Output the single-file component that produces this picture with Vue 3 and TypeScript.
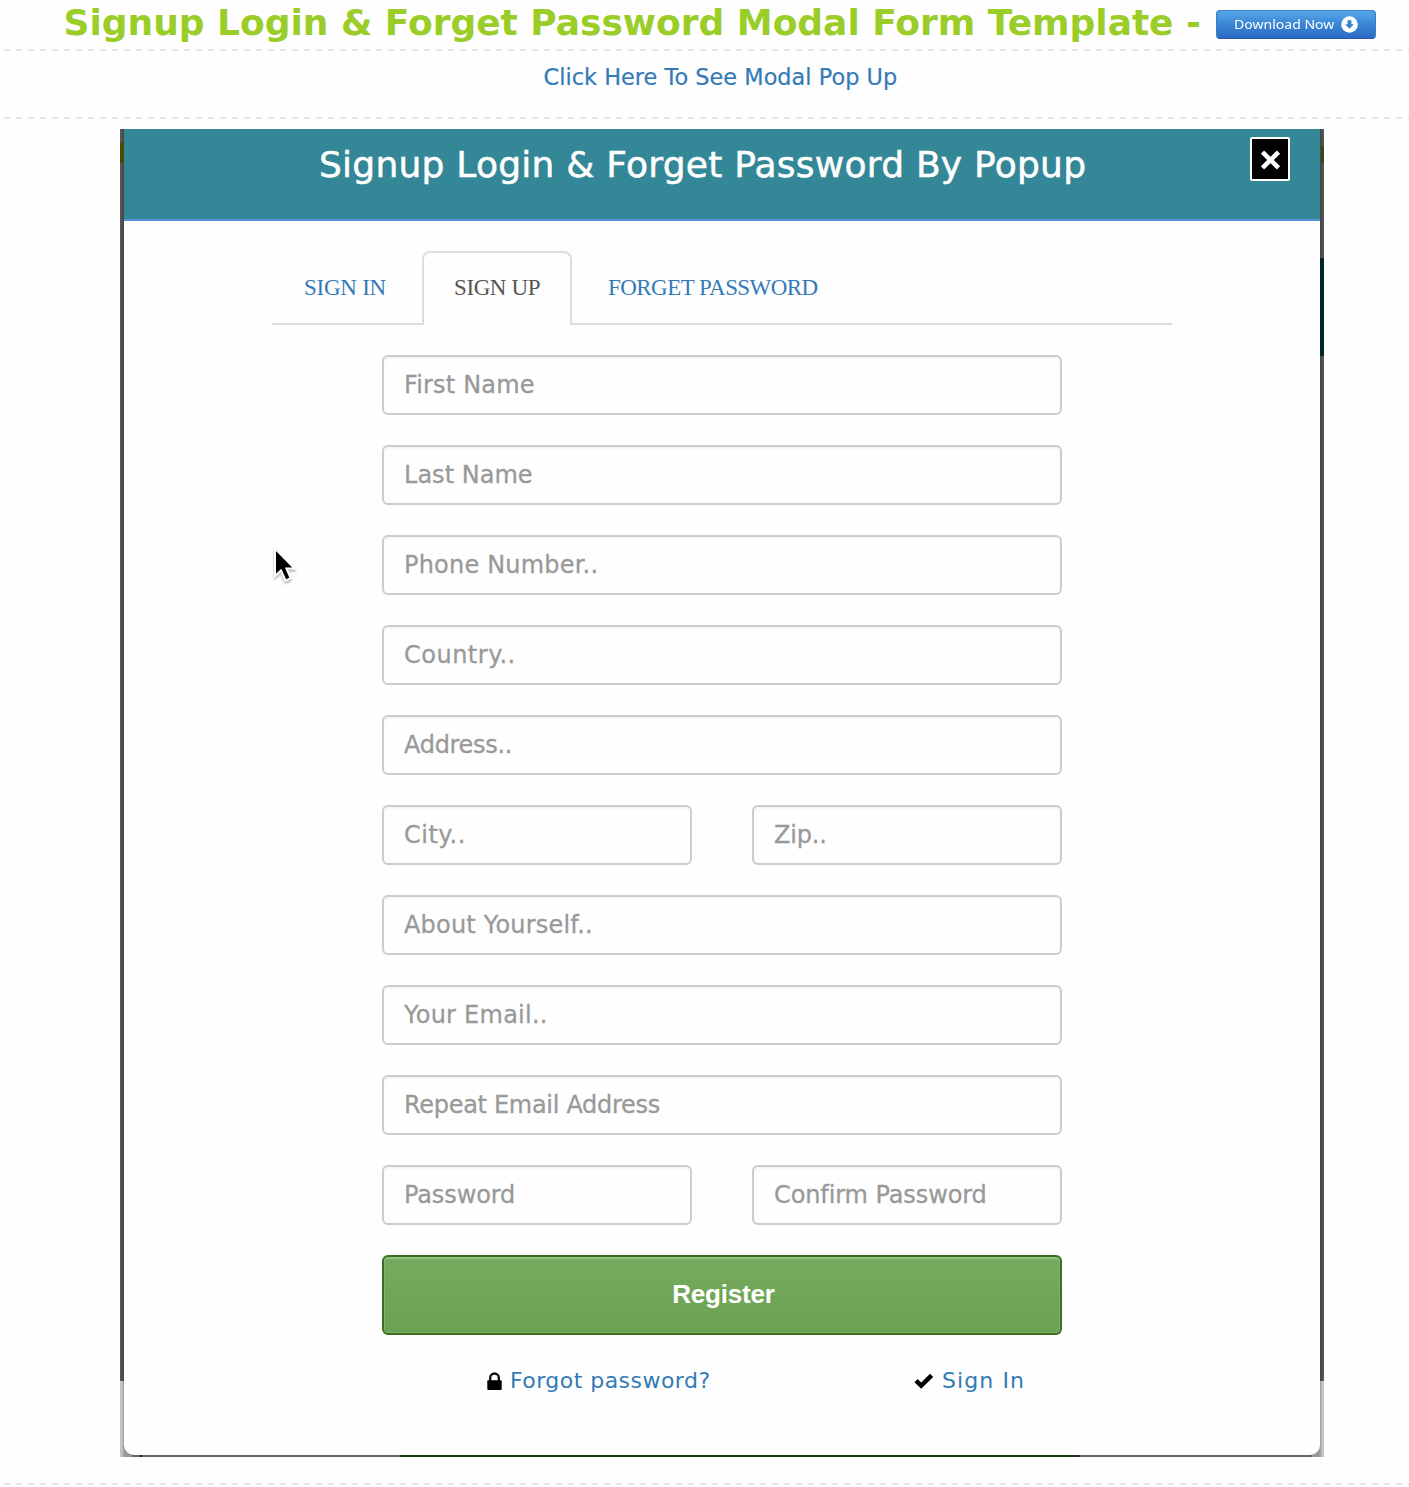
<script setup lang="ts">
interface Field {
  label: string
  tracking: number
  type?: string
}

interface Tab {
  label: string
  tracking: number
  active?: boolean
}

const tabs: Tab[] = [
  { label: 'SIGN IN', tracking: -0.25 },
  { label: 'SIGN UP', tracking: -0.4, active: true },
  { label: 'FORGET PASSWORD', tracking: -0.55 },
]

const rows: Field[][] = [
  [{ label: 'First Name', tracking: 0.17 }],
  [{ label: 'Last Name', tracking: 0.02 }],
  [{ label: 'Phone Number..', tracking: 0.2 }],
  [{ label: 'Country..', tracking: 0.5 }],
  [{ label: 'Address..', tracking: -0.3 }],
  [{ label: 'City..', tracking: 0.5 }, { label: 'Zip..', tracking: -0.2 }],
  [{ label: 'About Yourself..', tracking: 0.2 }],
  [{ label: 'Your Email..', tracking: 0.25 }],
  [{ label: 'Repeat Email Address', tracking: -0.3 }],
  [
    { label: 'Password', tracking: -0.12, type: 'password' },
    { label: 'Confirm Password', tracking: -0.1, type: 'password' },
  ],
]
</script>

<template>
  <main class="page">
    <header class="title-bar">
      <h1>Signup Login &amp; Forget Password Modal Form Template -</h1>
      <a class="download" href="#">
        <span class="download-text">Download Now</span>
        <svg class="download-icon" viewBox="0 0 17 17">
          <circle cx="8.5" cy="8.5" r="8.3" fill="#fff" />
          <path d="M6.6 4.2h3.8v4h2.5L8.5 12.7 4.1 8.2h2.5z" fill="#3a80d0" />
        </svg>
      </a>
    </header>
    <div class="dashes"></div>
    <div class="link-row"><a href="#">Click Here To See Modal Pop Up</a></div>
    <div class="dashes"></div>

    <section class="frame">
      <div class="modal">
        <div class="modal-head">
          <h2>Signup Login &amp; Forget Password By Popup</h2>
          <button class="close" aria-label="Close">
            <svg viewBox="0 0 21 20">
              <path d="M2.5 2.2 18.5 17.8M18.5 2.2 2.5 17.8" stroke="#fff" stroke-width="4.6" />
            </svg>
          </button>
        </div>

        <nav class="tabs">
          <a
            v-for="tab in tabs"
            :key="tab.label"
            class="tab"
            :class="{ active: tab.active }"
            :style="{ letterSpacing: tab.tracking + 'px' }"
            href="#"
          >{{ tab.label }}</a>
        </nav>

        <form class="form" @submit.prevent>
          <div v-for="(row, i) in rows" :key="i" class="row">
            <input
              v-for="field in row"
              :key="field.label"
              :type="field.type ?? 'text'"
              :placeholder="field.label"
              :style="{ letterSpacing: field.tracking + 'px' }"
            />
          </div>
          <button class="register" type="submit">Register</button>
        </form>

        <div class="links">
          <span class="forgot">
            <svg width="15" height="19" viewBox="0 0 15 19">
              <path d="M3.2 9V5.8a4.3 4.3 0 0 1 8.6 0V9" fill="none" stroke="#111" stroke-width="2.4" />
              <rect x="0.3" y="8.2" width="14.4" height="9.8" rx="1" fill="#000" />
            </svg>
            <a href="#">Forgot password?</a>
          </span>
          <span class="signin">
            <svg width="20" height="16" viewBox="0 0 20 16">
              <path d="M2 7.6 7.2 12.6 17.6 2.4" fill="none" stroke="#000" stroke-width="4.4" />
            </svg>
            <a href="#">Sign In</a>
          </span>
        </div>

        <svg class="cursor" width="28" height="38" viewBox="0 0 28 38">
          <path
            d="M4 1.5V29L10 23.4 14.6 33.6 19.6 31.2 15.4 21.4H23.4Z"
            fill="#000"
            stroke="#fff"
            stroke-width="2"
          />
        </svg>
      </div>
    </section>
    <div class="dashes last"></div>
  </main>
</template>

<style>
body {
  background: #fefefe;
}
</style>

<style scoped>
* {
  box-sizing: border-box;
}

.page {
  width: 1409px;
  height: 1487px;
  overflow: hidden;
  font-family: Verdana, "DejaVu Sans", sans-serif;
}

a {
  color: #337ab7;
  text-decoration: none;
}

.title-bar {
  display: flex;
  align-items: flex-start;
  height: 49px;
  padding-left: 63.5px;
}

h1 {
  width: 1152.5px;
  margin: 0;
  color: #9acd28;
  font-size: 36px;
  font-weight: 700;
  line-height: 45px;
  letter-spacing: -0.01px;
  white-space: nowrap;
}

.download {
  display: flex;
  align-items: center;
  width: 160px;
  height: 29px;
  margin-top: 10px;
  padding-left: 17px;
  border: 1px solid #3b7fc4;
  border-bottom-color: #2458a4;
  border-radius: 4px;
  background: linear-gradient(#56a7e6, #3a84d5 50%, #2b6cc6);
}

.download-text {
  width: 107px;
  color: #fff;
  font: 13px/27px "Noto Sans", sans-serif;
  white-space: nowrap;
  transform: scaleX(1.08);
  transform-origin: 0 50%;
}

.download-icon {
  width: 17px;
  height: 17px;
}

.dashes {
  height: 2px;
  margin-left: 4px;
  background: repeating-linear-gradient(90deg, #e6e6eb 0 6px, transparent 6px 12px);
}

.link-row {
  height: 66px;
  padding-left: 543.5px;
  font-size: 22.4px;
  line-height: 52px;
  letter-spacing: 0.03px;
  white-space: nowrap;
}

.link-row a {
  -webkit-text-stroke: 0.2px #337ab7;
}

.frame {
  width: 1204px;
  height: 1328px;
  margin: 10px 0 0 120px;
  padding: 0 4px 2px;
  background:
    linear-gradient(#4a4a08, #4a4a08) 0 14px / 4px 20px no-repeat,
    linear-gradient(#2d4a18, #2d4a18) 100% 17px / 3px 17px no-repeat,
    linear-gradient(#04252b, #04252b) 100% 129px / 4px 98px no-repeat,
    linear-gradient(90deg, #5a5a5a, #444) 0 0 / 4px 1252px no-repeat,
    linear-gradient(90deg, #444, #5a5a5a) 100% 0 / 4px 1252px no-repeat,
    linear-gradient(#111, #111) 20px 100% / 2px 2px no-repeat,
    linear-gradient(#1a3a12, #1a3a12) 280px 100% / 680px 2px no-repeat,
    linear-gradient(#666, #666) 12px 100% / 1180px 2px no-repeat,
    linear-gradient(90deg, #c4c4c4 0 2px, #999 4px 1200px, #c4c4c4 1202px);
}

.modal {
  position: relative;
  height: 1326px;
  border-radius: 0 0 10px 10px;
  background: #fefefe;
}

.modal-head {
  display: flex;
  align-items: flex-start;
  height: 92px;
  padding: 8px 30px 0 195px;
  border-bottom: 2px solid #5590dd;
  background: #348796;
}

h2 {
  flex: 1;
  margin: 0;
  color: #fff;
  font-size: 36px;
  font-weight: 400;
  line-height: 56px;
  letter-spacing: 0.24px;
  white-space: nowrap;
  -webkit-text-stroke: 0.5px #fff;
}

.close {
  display: grid;
  place-items: center;
  width: 40px;
  height: 44px;
  padding: 1px 0 0;
  border: 2px solid #fff;
  border-radius: 2px;
  background: #000;
}

.close svg {
  width: 21px;
  height: 20px;
}

.tabs {
  display: flex;
  width: 900px;
  height: 74px;
  margin: 30px 0 0 148px;
  box-shadow: inset 0 -2px #ddd;
}

.tab {
  width: 150px;
  height: 74px;
  border: 2px solid transparent;
  border-bottom: 0;
  padding-left: 30px;
  font: 23px/70px "Liberation Serif", serif;
  white-space: nowrap;
}

.tab:last-child {
  padding-left: 34px;
}

.tab.active {
  border-color: #ddd;
  border-radius: 8px 8px 0 0;
  background: #fefefe;
  color: #555;
}

.form {
  display: flex;
  flex-direction: column;
  gap: 30px;
  width: 680px;
  margin: 30px 0 0 258px;
}

.row {
  display: flex;
  gap: 60px;
  height: 60px;
}

input {
  flex: 1;
  width: 0;
  min-width: 0;
  height: 60px;
  margin: 0;
  padding: 0 0 0 20px;
  border: 2px solid #ccc;
  border-radius: 6px;
  outline: 0;
  background: #fefefe;
  box-shadow: inset 0 2px 3px rgba(0, 0, 0, 0.04);
  font: 24px Verdana, "DejaVu Sans", sans-serif;
}

input::placeholder {
  color: #999;
  opacity: 1;
  -webkit-text-stroke: 0.3px #999;
}

.register {
  height: 80px;
  padding: 0 0 2px 3px;
  border: 2px solid #3b6e22;
  border-radius: 6px;
  background: linear-gradient(#77ab60, #6aa150);
  box-shadow: inset 0 2px 0 #93c47d, inset 0 0 0 1px #7fb56a;
  color: #fff;
  font: 700 26px "Liberation Sans", Arial, sans-serif;
  letter-spacing: -0.2px;
}

.links {
  display: flex;
  height: 40px;
  margin-top: 26px;
  font-size: 22px;
  line-height: 42px;
  white-space: nowrap;
}

.links span {
  display: flex;
  align-items: center;
}

.forgot {
  width: 427px;
  margin-left: 363px;
  gap: 8px;
  letter-spacing: 0.46px;
}

.signin {
  gap: 8px;
  letter-spacing: 1.1px;
}

.cursor {
  position: absolute;
  left: 147px;
  top: 418px;
  filter: drop-shadow(0 2px 1px rgba(0, 0, 0, 0.3));
}

.last {
  margin-top: 26px;
}
</style>
